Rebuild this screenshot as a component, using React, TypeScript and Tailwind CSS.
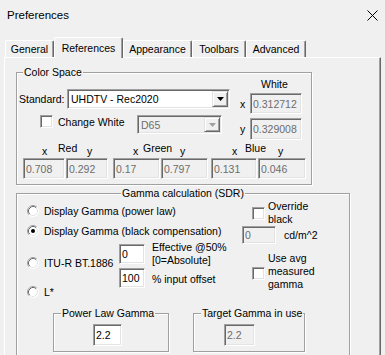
import React from "react";

const sunken =
  "border border-t-[#a0a0a0] border-l-[#a0a0a0] border-b-white border-r-white shadow-[inset_1px_1px_0_#696969,inset_-1px_-1px_0_#e3e3e3]";
const raised =
  "border border-t-[#e3e3e3] border-l-[#e3e3e3] border-b-[#696969] border-r-[#696969] shadow-[inset_1px_1px_0_#ffffff,inset_-1px_-1px_0_#a0a0a0]";

function Edit({
  value,
  className,
  disabled,
}: {
  value: string;
  className: string;
  disabled?: boolean;
}) {
  return (
    <div
      className={`${sunken} flex items-center pl-[2px] overflow-hidden whitespace-nowrap shrink-0 ${
        disabled ? "bg-[#f0f0f0] text-[#6d6d6d]" : "bg-white text-black"
      } ${className}`}
    >
      {value}
    </div>
  );
}

function Check() {
  return <div className={`${sunken} w-[13px] h-[13px] bg-white shrink-0`} />;
}

function Radio({ checked }: { checked?: boolean }) {
  return (
    <svg width="12" height="12" viewBox="0 0 12 12" className="shrink-0">
      <circle cx="6" cy="6" r="5.5" fill="#ffffff" />
      <path d="M2.11 9.89 A5.5 5.5 0 0 1 9.89 2.11" fill="none" stroke="#a0a0a0" strokeWidth="1" />
      <path d="M2.82 9.18 A4.5 4.5 0 0 1 9.18 2.82" fill="none" stroke="#696969" strokeWidth="1" />
      <path d="M9.89 2.11 A5.5 5.5 0 0 1 2.11 9.89" fill="none" stroke="#ffffff" strokeWidth="1" />
      <path d="M9.18 2.82 A4.5 4.5 0 0 1 2.82 9.18" fill="none" stroke="#e3e3e3" strokeWidth="1" />
      {checked && <circle cx="6" cy="6" r="2" fill="#000000" />}
    </svg>
  );
}

function Combo({
  value,
  className,
  disabled,
}: {
  value: string;
  className: string;
  disabled?: boolean;
}) {
  return (
    <div
      className={`${sunken} flex items-stretch p-[1px] shrink-0 ${
        disabled ? "bg-[#f0f0f0] text-[#6d6d6d]" : "bg-white text-black"
      } ${className}`}
    >
      <span className="flex-1 flex items-center pl-[2px] whitespace-nowrap overflow-hidden">{value}</span>
      <div className={`${raised} w-[16px] bg-[#f0f0f0] flex items-center justify-center`}>
        <svg width="7" height="4" viewBox="0 0 7 4">
          <path d="M0 0 H7 L3.5 4 Z" fill={disabled ? "#a0a0a0" : "#000000"} />
        </svg>
      </div>
    </div>
  );
}

function Group({
  label,
  labelPos,
  className,
  children,
}: {
  label: string;
  labelPos: string;
  className: string;
  children?: React.ReactNode;
}) {
  return (
    <div
      className={`relative border border-[#a0a0a0] shadow-[inset_1px_1px_0_#ffffff,1px_1px_0_#ffffff] ${className}`}
    >
      <span
        className={`absolute top-[-7px] leading-[12px] px-[1px] bg-[#f0f0f0] whitespace-nowrap ${labelPos}`}
      >
        {label}
      </span>
      {children}
    </div>
  );
}

function Tab({ label, className, selected }: { label: string; className: string; selected?: boolean }) {
  return (
    <div
      className={`flex items-center justify-center border-t border-l border-white border-r border-r-[#696969] shadow-[inset_-1px_0_0_#a0a0a0] rounded-tl-[2px] rounded-tr-[2px] bg-[#f0f0f0] whitespace-nowrap ${
        selected ? "h-[21px] mb-[-1px] relative z-10 pb-[1px]" : "h-[17px]"
      } ${className}`}
    >
      {label}
    </div>
  );
}

export default function App() {
  return (
    <div className="w-[385px] h-[355px] overflow-hidden bg-[#f0f0f0] font-['Liberation_Sans',Arial,sans-serif] text-[10.5px] leading-[12px] text-black">
      {/* Title bar */}
      <div className="h-[30px] flex items-center justify-between pl-[7px] pr-[7px]">
        <span className="text-[11.5px] leading-[14px]">Preferences</span>
        <svg width="11" height="11" viewBox="0 0 11 11">
          <path d="M0.5 0.5 L10.5 10.5 M10.5 0.5 L0.5 10.5" stroke="#000000" strokeWidth="1" />
        </svg>
      </div>

      {/* Tabs */}
      <div className="mt-[7px] h-[20px] flex items-end pl-[5px]">
        <Tab label="General" className="w-[49px]" />
        <Tab label="References" className="w-[69px]" selected />
        <Tab label="Appearance" className="w-[69px]" />
        <Tab label="Toolbars" className="w-[54px]" />
        <Tab label="Advanced" className="w-[60px]" />
      </div>

      {/* Panel */}
      <div className="ml-[4px] w-[377px] h-[320px] border-l border-t border-white border-r border-r-[#696969] shadow-[inset_-1px_0_0_#a0a0a0] pt-[14px] pl-[11px]">
        {/* Color Space */}
        <Group label="Color Space" labelPos="left-[6px]" className="w-[296px] pb-[5px]">
          <div className="flex">
            <div className="w-[213px] pl-[2px] pt-[16px]">
              <div className="flex items-center h-[20px]">
                <span className="w-[48px]">Standard:</span>
                <Combo value="UHDTV - Rec2020" className="w-[163px] h-[20px]" />
              </div>
              <div className="flex items-start mt-[6px]">
                <div className="flex items-center h-[13px] ml-[21px]">
                  <Check />
                  <span className="ml-[5px] w-[79px]">Change White</span>
                </div>
                <Combo value="D65" className="w-[85px] h-[19px]" disabled />
              </div>
            </div>
            <div className="w-[80px]">
              <div className="mt-[5px] pl-[31px] h-[12px]">White</div>
              <div className="flex items-center mt-[3px]">
                <span className="w-[20px] pl-[10px]">x</span>
                <Edit value="0.312712" className="w-[52px] h-[21px]" disabled />
              </div>
              <div className="flex items-center mt-[4px]">
                <span className="w-[20px] pl-[10px]">y</span>
                <Edit value="0.329008" className="w-[52px] h-[22px]" disabled />
              </div>
            </div>
          </div>
          <div className="flex items-start mt-[2px] h-[14px] pl-[25px]">
            <span className="w-[16px] mt-[3px]">x</span>
            <span className="w-[29px]">Red</span>
            <span className="w-[46px] mt-[3px]">y</span>
            <span className="w-[10px] mt-[3px]">x</span>
            <span className="w-[37px]">Green</span>
            <span className="w-[52px] mt-[3px]">y</span>
            <span className="w-[13px] mt-[3px]">x</span>
            <span className="w-[33px]">Blue</span>
            <span className="mt-[3px]">y</span>
          </div>
          <div className="flex mt-[2px] pl-[6px]">
            <Edit value="0.708" className="w-[42px] h-[21px]" disabled />
            <Edit value="0.292" className="w-[42px] h-[21px] ml-[1px]" disabled />
            <Edit value="0.17" className="w-[47px] h-[21px] ml-[5px]" disabled />
            <Edit value="0.797" className="w-[47px] h-[21px] ml-[1px]" disabled />
            <Edit value="0.131" className="w-[46px] h-[21px] ml-[3px]" disabled />
            <Edit value="0.046" className="w-[48px] h-[21px] ml-[1px]" disabled />
          </div>
        </Group>

        {/* Gamma calculation */}
        <Group
          label="Gamma calculation (SDR)"
          labelPos="left-[104px]"
          className="w-[334px] mt-[8px] pb-[10px]"
        >
          <div className="flex">
            <div className="w-[225px] pl-[10px]">
              <div className="flex items-center gap-[5px] h-[14px] mt-[10px]">
                <Radio />
                <span className="whitespace-nowrap">Display Gamma (power law)</span>
              </div>
              <div className="flex items-center gap-[5px] h-[14px] mt-[6px]">
                <Radio checked />
                <span className="whitespace-nowrap">Display Gamma (black compensation)</span>
              </div>
              <div className="flex items-start mt-[3px]">
                <div className="w-[92px]">
                  <div className="flex items-center gap-[5px] h-[14px] mt-[15px]">
                    <Radio />
                    <span className="whitespace-nowrap">ITU-R BT.1886</span>
                  </div>
                  <div className="flex items-center gap-[5px] h-[14px] mt-[15px]">
                    <Radio />
                    <span>L*</span>
                  </div>
                </div>
                <div className="w-[26px]">
                  <Edit value="0" className="w-[26px] h-[20px] mt-[3px]" />
                  <Edit value="100" className="w-[26px] h-[20px] mt-[4px]" />
                </div>
                <div className="ml-[7px] leading-[13px] whitespace-nowrap">
                  <div>Effective @50%</div>
                  <div>[0=Absolute]</div>
                  <div className="mt-[6px]">% input offset</div>
                </div>
              </div>
            </div>
            <div className="flex flex-col">
              <div className="flex items-start pl-[10px] mt-[6px]">
                <div className="mt-[7px]">
                  <Check />
                </div>
                <div className="ml-[3px] leading-[13px]">
                  <div>Override</div>
                  <div>black</div>
                </div>
              </div>
              <div className="flex items-center">
                <Edit value="0" className="w-[34px] h-[18px]" disabled />
                <span className="ml-[8px]">cd/m^2</span>
              </div>
              <div className="flex items-start pl-[10px] mt-[8px]">
                <div className="mt-[15px]">
                  <Check />
                </div>
                <div className="ml-[3px] leading-[13px]">
                  <div>Use avg</div>
                  <div>measured</div>
                  <div>gamma</div>
                </div>
              </div>
            </div>
          </div>
          <div className="flex mt-[14px]">
            <Group label="Power Law Gamma" labelPos="left-[7px]" className="ml-[36px] w-[116px] h-[39px]">
              <Edit value="2.2" className="ml-[39px] mt-[10px] w-[29px] h-[22px]" />
            </Group>
            <Group label="Target Gamma in use" labelPos="left-[7px]" className="ml-[24px] w-[112px] h-[39px]">
              <Edit value="2.2" className="ml-[30px] mt-[10px] w-[31px] h-[22px]" disabled />
            </Group>
          </div>
        </Group>
      </div>
    </div>
  );
}
